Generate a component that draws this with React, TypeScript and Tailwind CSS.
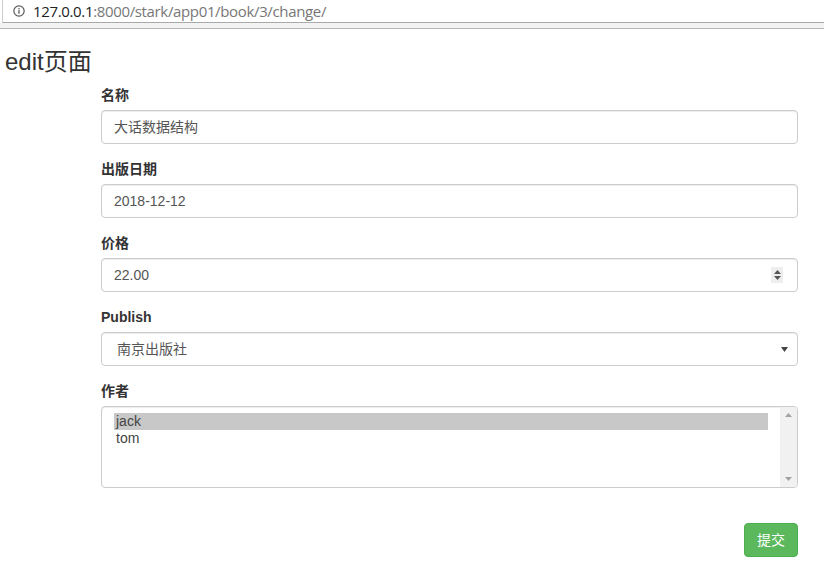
import React from "react";

const cjk = { fontFamily: '"Liberation Sans", "Noto Sans CJK SC", sans-serif' };

function Label({ children }: { children: React.ReactNode }) {
  return (
    <div className="h-[20px] leading-[20px] mb-[5px] text-[14px] font-bold text-[#333]" style={cjk}>
      {children}
    </div>
  );
}

function Field({ children }: { children: React.ReactNode }) {
  return (
    <div className="h-[34px] rounded-[4px] border border-[#ccc] bg-white shadow-[inset_0_1px_1px_rgba(0,0,0,0.075)] flex items-center px-[12px] text-[14px] text-[#555]" style={cjk}>
      {children}
    </div>
  );
}

export default function App() {
  return (
    <div className="w-[824px] h-[571px] bg-white overflow-hidden" style={cjk}>
      {/* browser address bar */}
      <div className="h-[23px] border-b border-[#a9a9a9] border-l border-l-[#cfcfcf] ml-[2px] flex items-center pl-[10px] bg-white">
        <svg width="12" height="12" viewBox="0 0 13 13" className="mr-[8px]">
          <circle cx="6.5" cy="6.5" r="5.6" fill="none" stroke="#5a5a5a" strokeWidth="1.3" />
          <rect x="5.8" y="5.5" width="1.4" height="4" fill="#5a5a5a" />
          <rect x="5.8" y="3.3" width="1.4" height="1.4" fill="#5a5a5a" />
        </svg>
        <span className="text-[15px] leading-none tracking-[-0.35px]" style={{ fontFamily: '"Open Sans", "Noto Sans", sans-serif' }}>
          <span className="text-[#222]">127.0.0.1</span>
          <span className="text-[#777]">:8000/stark/app01/book/3/change/</span>
        </span>
      </div>
      <div className="h-[6px] bg-[#f3f3f3] border-b border-[#b5b5b5]" />

      <div className="pl-[5px] pt-[20px]">
        <h3 className="text-[24px] leading-[26px] text-[#333] mb-[10px] font-normal" style={cjk}>edit页面</h3>
      </div>

      <div className="ml-[101px] w-[697px]">
        <div className="mb-[15px]">
          <Label>名称</Label>
          <Field>大话数据结构</Field>
        </div>
        <div className="mb-[15px]">
          <Label>出版日期</Label>
          <Field>2018-12-12</Field>
        </div>
        <div className="mb-[15px]">
          <Label>价格</Label>
          <Field>
            <span className="flex-1">22.00</span>
            <div className="w-[12px] h-[16px] bg-[#eeeeee] flex flex-col items-center justify-center gap-[2px] mr-[2px]">
              <svg width="7" height="4" viewBox="0 0 7 4"><path d="M0 4 L3.5 0 L7 4 Z" fill="#555" /></svg>
              <svg width="7" height="4" viewBox="0 0 7 4"><path d="M0 0 L3.5 4 L7 0 Z" fill="#555" /></svg>
            </div>
          </Field>
        </div>
        <div className="mb-[15px]">
          <Label>Publish</Label>
          <Field>
            <span className="flex-1 pl-[3px]">南京出版社</span>
            <svg width="7" height="5" viewBox="0 0 7 5" className="-mr-[3px]"><path d="M0 0 L7 0 L3.5 5 Z" fill="#444" /></svg>
          </Field>
        </div>
        <div className="mb-[15px]">
          <Label>作者</Label>
          <div className="h-[82px] rounded-[4px] border border-[#ccc] bg-white shadow-[inset_0_1px_1px_rgba(0,0,0,0.075)] flex">
            <div className="flex-1 pl-[12px] pr-[12px] pt-[6px] text-[14px] text-[#444]">
              <div className="h-[17px] leading-[17px] bg-[#c8c8c8] pl-[2px]">jack</div>
              <div className="h-[17px] leading-[17px] pl-[2px]">tom</div>
            </div>
            <div className="w-[17px] bg-[#f1f1f1] flex flex-col items-center justify-between py-[6px] rounded-r-[3px]">
              <svg width="7" height="4" viewBox="0 0 7 4"><path d="M0 4 L3.5 0 L7 4 Z" fill="#a3a3a3" /></svg>
              <svg width="7" height="4" viewBox="0 0 7 4"><path d="M0 0 L3.5 4 L7 0 Z" fill="#a3a3a3" /></svg>
            </div>
          </div>
        </div>
        <div className="flex justify-end pt-[20px]">
          <div className="w-[54px] h-[34px] rounded-[4px] bg-[#5cb85c] border border-[#4cae4c] text-white text-[14px] flex items-center justify-center" style={cjk}>
            提交
          </div>
        </div>
      </div>
    </div>
  );
}
